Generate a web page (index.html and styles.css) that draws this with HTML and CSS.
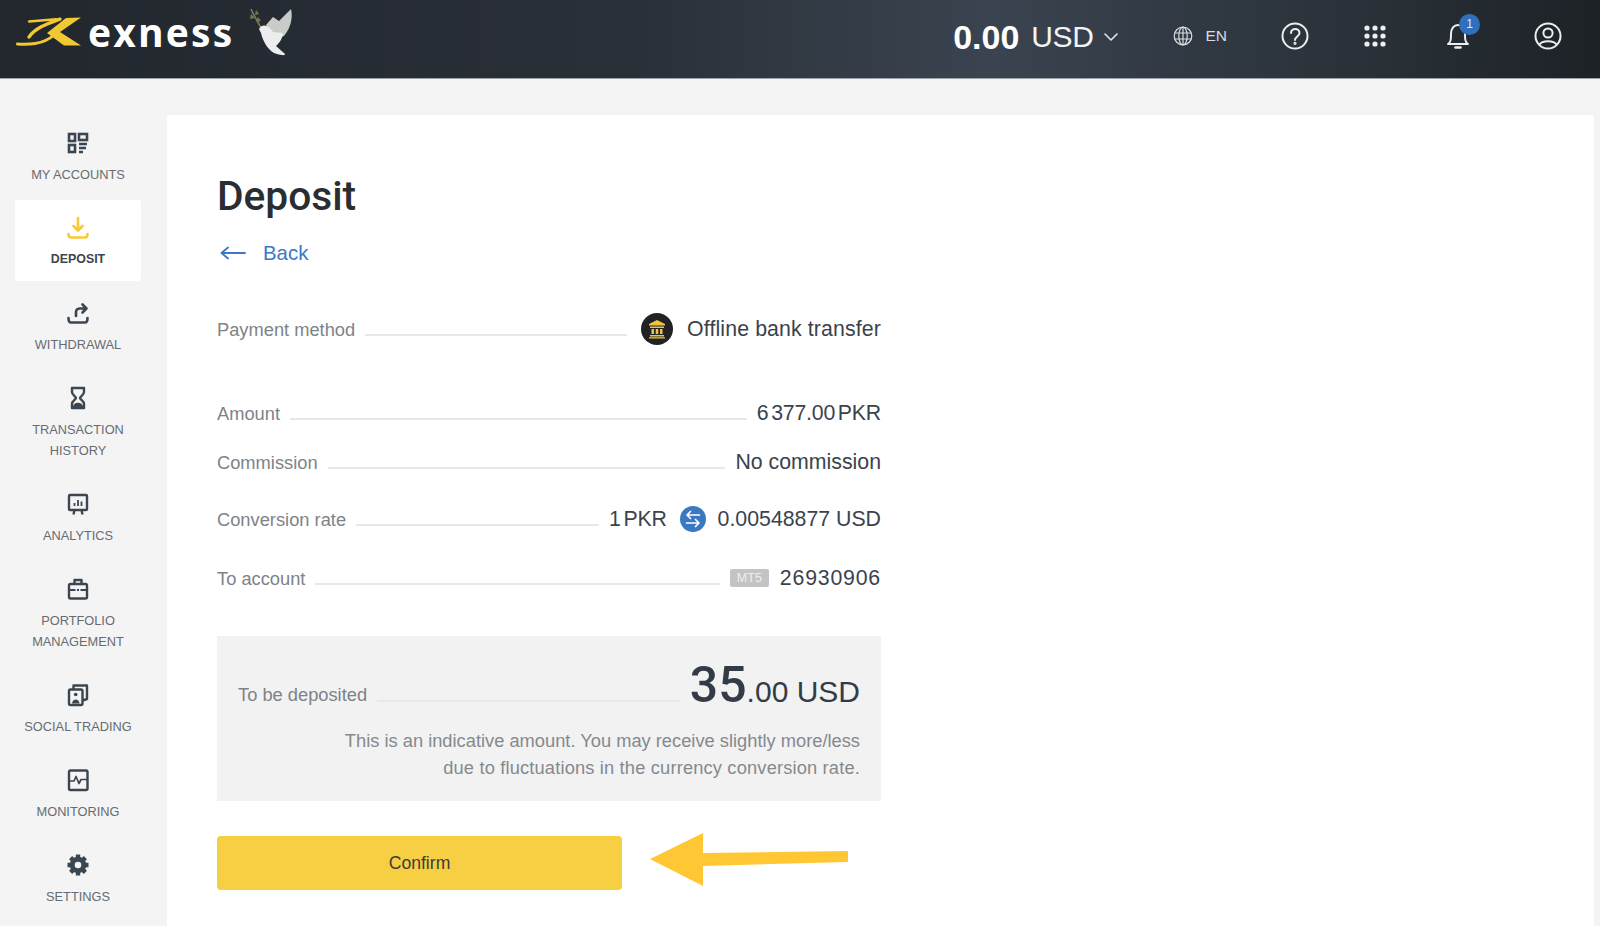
FILE: index.html
```html
<!DOCTYPE html>
<html lang="en">
<head>
<meta charset="utf-8">
<title>Deposit</title>
<link rel="stylesheet" href="styles.css">
</head>
<body>
<header class="topbar">
  <div class="brand">
    <svg class="brand-mark" viewBox="0 0 66 30" fill="none" stroke="#f2c832" stroke-linecap="round" stroke-linejoin="round">
      <path d="M13 4.5 L40 2.2" stroke-width="2.4"/>
      <path d="M44 2.2 C34 6 20 10 13 20" stroke-width="3.4"/>
      <path d="M1.5 27 C11 27.5 27 28 38 18" stroke-width="3"/>
      <path d="M65 .5 L50 1 L31 16 L48 28.5 L65 28.5 L44 15 Z" fill="#f2c832" stroke="none"/>
    </svg>
    <span class="brand-name">exness</span>
    <svg class="brand-dove" viewBox="0 0 44 48">
      <path d="M2 1 C4 6 9 14 12 20" fill="none" stroke="#7c7f5c" stroke-width="1.6"/>
      <path d="M7 2 L10 6 L6 7 Z M2 6 L6 10 L1 11 Z M9 9 L12 13 L7 14 Z" fill="#76794f"/>
      <path d="M17 17 L24 9 L30 13 L42 1 C44 9 42 20 35 28 L28 31 L20 26 Z" fill="#c9cbc9"/>
      <path d="M10 21 C13 15 20 17 24 24 L34 25 C33 33 29 36 27 38 L36 46 C36 48 32 47 28 46 C20 44 14 34 12 25 Z" fill="#eceded"/>
    </svg>
  </div>
  <div class="top-actions">
    <div class="balance">
      <strong class="balance-num">0.00</strong>
      <span class="balance-cur">USD</span>
      <svg class="chevron" viewBox="0 0 16 10" fill="none" stroke="#e4e7ea" stroke-width="1.6" stroke-linecap="round" stroke-linejoin="round"><path d="M2 2 L8 8 L14 2"/></svg>
    </div>
    <div class="lang">
      <svg class="ico-20" viewBox="0 0 20 20" fill="none" stroke="#d9dde1" stroke-width="1.2"><circle cx="10" cy="10" r="8.8"/><ellipse cx="10" cy="10" rx="4.2" ry="8.8"/><path d="M10 1.2 V18.8 M1.4 7 H18.6 M1.4 13 H18.6"/></svg>
      <span class="lang-code">EN</span>
    </div>
    <svg class="ico-28" viewBox="0 0 28 28" fill="none" stroke="#eceef0" stroke-width="2" stroke-linecap="round"><circle cx="14" cy="14" r="12.5"/><path d="M10 11 C10 5.8 18.5 5.8 18.5 11 C18.5 14.5 14 14.5 14 18"/><circle cx="14" cy="21.3" r="0.6"/></svg>
    <svg class="ico-grid" viewBox="0 0 24 24" fill="#eceef0"><circle cx="4" cy="4" r="2.6"/><circle cx="12" cy="4" r="2.6"/><circle cx="20" cy="4" r="2.6"/><circle cx="4" cy="12" r="2.6"/><circle cx="12" cy="12" r="2.6"/><circle cx="20" cy="12" r="2.6"/><circle cx="4" cy="20" r="2.6"/><circle cx="12" cy="20" r="2.6"/><circle cx="20" cy="20" r="2.6"/></svg>
    <div class="bell">
      <svg class="ico-bell" viewBox="0 0 24 28" fill="none" stroke="#eceef0" stroke-width="2" stroke-linejoin="round" stroke-linecap="round"><path d="M2 22 C5 20 5 17 5 12 C5 6.5 8 3 12 3 C16 3 19 6.5 19 12 C19 17 19 20 22 22 Z"/><path d="M9.5 25.5 H14.5" stroke-width="2.6"/></svg>
      <span class="bell-badge">1</span>
    </div>
    <svg class="ico-28" viewBox="0 0 28 28" fill="none" stroke="#eceef0" stroke-width="2"><circle cx="14" cy="14" r="12.5"/><circle cx="14" cy="11" r="4.6"/><path d="M5.5 22.5 C8 18 20 18 22.5 22.5"/></svg>
  </div>
</header>

<div class="shell">
  <nav class="sidenav">
    <a class="nav-item">
      <svg class="nav-ico" viewBox="0 0 24 24" fill="none" stroke="#3b4650" stroke-width="2.6"><rect x="3" y="3" width="6" height="7"/><rect x="13" y="3" width="8" height="6"/><rect x="3" y="14" width="6" height="7"/><path d="M13 13 H21 M13 17 H20 M13 21 H17"/></svg>
      <span class="nav-label">MY ACCOUNTS</span>
    </a>
    <a class="nav-item is-active">
      <svg class="nav-ico" viewBox="0 0 24 24" fill="none" stroke="#f7c935" stroke-width="2.6" stroke-linecap="round" stroke-linejoin="round"><path d="M12 2 V14 M7.5 10 L12 14.5 L16.5 10"/><path d="M2.5 18 C2.5 21 4 21.5 5 21.5 H19 C20 21.5 21.5 21 21.5 18"/></svg>
      <span class="nav-label">DEPOSIT</span>
    </a>
    <a class="nav-item">
      <svg class="nav-ico" viewBox="0 0 24 24" fill="none" stroke="#3b4650" stroke-width="2.6" stroke-linecap="round" stroke-linejoin="round"><path d="M10 15 V11 C10 8.5 12 7.5 14 7.5 H20 M16.5 3.5 L20.5 7.5 L16.5 11.5"/><path d="M2.5 17 C2.5 20.5 4 21.5 5 21.5 H19 C20 21.5 21.5 20.5 21.5 17"/></svg>
      <span class="nav-label">WITHDRAWAL</span>
    </a>
    <a class="nav-item">
      <svg class="nav-ico" viewBox="0 0 24 24" fill="none" stroke="#3b4650" stroke-width="2.4" stroke-linejoin="round"><path d="M6 2 H18 V6 C18 9 14 10.5 14 12 C14 13.5 18 15 18 18 V22 H6 V18 C6 15 10 13.5 10 12 C10 10.5 6 9 6 6 Z"/><path d="M8 21 C9 17 15 17 16 21 Z" fill="#3b4650"/></svg>
      <span class="nav-label">TRANSACTION<br>HISTORY</span>
    </a>
    <a class="nav-item">
      <svg class="nav-ico" viewBox="0 0 24 24" fill="none" stroke="#3b4650" stroke-width="2.4"><rect x="3" y="3" width="18" height="15" rx="1"/><path d="M8.5 18 L7.5 22.5 M15.5 18 L16.5 22.5"/><path d="M8.5 11 V14 M12 8 V14 M15.5 9.5 V14" stroke-width="1.8"/></svg>
      <span class="nav-label">ANALYTICS</span>
    </a>
    <a class="nav-item">
      <svg class="nav-ico" viewBox="0 0 24 24" fill="none" stroke="#3b4650" stroke-width="2.4" stroke-linejoin="round"><rect x="3" y="7" width="18" height="14.5" rx="1.5"/><path d="M8.5 7 V3 H15.5 V7"/><path d="M3 13 H9.5 M14.5 13 H21 M11 13 H13" stroke-width="1.8"/></svg>
      <span class="nav-label">PORTFOLIO<br>MANAGEMENT</span>
    </a>
    <a class="nav-item">
      <svg class="nav-ico" viewBox="0 0 24 24" fill="none" stroke="#3b4650" stroke-width="2.4" stroke-linejoin="round"><rect x="3" y="6.5" width="13.5" height="15.5" rx="1.5"/><path d="M7.5 6.5 V2.5 H21 V16 L16.5 17.5"/><circle cx="9.7" cy="11.5" r="1.8" fill="#3b4650" stroke="none"/><path d="M6 20.5 C6.5 15 13 15 13.5 20.5 Z" fill="#3b4650" stroke="none"/></svg>
      <span class="nav-label">SOCIAL TRADING</span>
    </a>
    <a class="nav-item">
      <svg class="nav-ico" viewBox="0 0 24 24" fill="none" stroke="#3b4650" stroke-width="2.4" stroke-linejoin="round"><rect x="3" y="2.5" width="18.5" height="19.5" rx="1.5"/><path d="M3 13 H8 L10 8.5 L13 15.5 L15 11.5 H21.5" stroke-width="1.7"/></svg>
      <span class="nav-label">MONITORING</span>
    </a>
    <a class="nav-item">
      <svg class="nav-ico" viewBox="0 0 24 24" fill="none" stroke="#3b4650"><g stroke-width="4.4"><path d="M12 1.5 V22.5 M1.5 12 H22.5 M4.6 4.6 L19.4 19.4 M19.4 4.6 L4.6 19.4"/></g><circle cx="12" cy="12" r="5.8" fill="#f4f4f4" stroke-width="5"/></svg>
      <span class="nav-label">SETTINGS</span>
    </a>
  </nav>

  <main class="card">
    <h1 class="title">Deposit</h1>
    <a class="back">
      <svg class="back-ico" viewBox="0 0 26 14" fill="none" stroke="#3c78c3" stroke-width="1.8" stroke-linecap="round" stroke-linejoin="round"><path d="M25 7 H2 M8 1.5 L1.5 7 L8 12.5"/></svg>
      <span>Back</span>
    </a>

    <div class="details">
      <div class="row row-method">
        <span class="row-label">Payment method</span><i class="leader"></i>
        <svg class="ico-bank" viewBox="0 0 32 32"><circle cx="16" cy="16" r="16" fill="#202226"/><path d="M16 7 L24 11 V12.5 H8 V11 Z M9 13.5 H23 V15 H9 Z M10.5 16 H13 V21 H10.5 Z M14.7 16 H17.3 V21 H14.7 Z M19 16 H21.5 V21 H19 Z M9 22 H23 V23.5 H9 Z M8 24.2 H24 V25.5 H8 Z" fill="#f0c53e"/></svg>
        <span class="row-value value-wide">Offline bank transfer</span>
      </div>
      <div class="row row-amount">
        <span class="row-label">Amount</span><i class="leader"></i>
        <span class="row-value value-tight">6 377.00 PKR</span>
      </div>
      <div class="row row-commission">
        <span class="row-label">Commission</span><i class="leader"></i>
        <span class="row-value">No commission</span>
      </div>
      <div class="row row-rate">
        <span class="row-label">Conversion rate</span><i class="leader"></i>
        <span class="row-value value-tight">1 PKR</span>
        <svg class="ico-swap" viewBox="0 0 26 26"><circle cx="13" cy="13" r="13" fill="#3a78c2"/><path d="M19.5 9 H7.5 M10.5 5.5 L7 9 L10.5 12.5 M6.5 17 H18.5 M15.5 13.5 L19 17 L15.5 20.5" fill="none" stroke="#fff" stroke-width="1.7" stroke-linecap="round" stroke-linejoin="round"/></svg>
        <span class="row-value">0.00548877 USD</span>
      </div>
      <div class="row row-account">
        <span class="row-label">To account</span><i class="leader"></i>
        <span class="badge">MT5</span>
        <span class="row-value value-number">26930906</span>
      </div>
    </div>

    <section class="summary">
      <div class="summary-top">
        <span class="row-label">To be deposited</span><i class="leader"></i>
        <span class="sum"><b class="sum-int">35</b><span class="sum-rest">.00 USD</span></span>
      </div>
      <p class="note">This is an indicative amount. You may receive slightly more/less<br><span class="note-second">due to fluctuations in the currency conversion rate.</span></p>
    </section>

    <div class="actions">
      <button class="confirm" type="button">Confirm</button>
      <svg class="pointer" viewBox="0 0 200 54"><path d="M0 26 L53 0 V20 L198 18 V29 L53 33 V53 Z" fill="#ffc734"/></svg>
    </div>
  </main>
</div>
</body>
</html>
```

FILE: styles.css
```css
* { box-sizing: border-box; }
html, body { margin: 0; height: 100%; overflow: hidden; }
body {
  background: #f4f4f4;
  color: #3a434c;
  font-family: "Liberation Sans", Arial, sans-serif;
}

/* top bar */
.topbar {
  height: 79px;
  padding: 0 38px 7px 16px;
  display: flex;
  align-items: center;
  justify-content: space-between;
  border-bottom: 1px solid #9ea3a7;
  background: linear-gradient(90deg, #22272e 0%, #2a3038 40%, #3a4450 62%, #323b45 72%, #2a3138 85%, #1c2226 100%);
}
.brand { display: flex; align-items: center; margin-bottom: 8px; }
.brand-mark { width: 66px; height: 30px; display: block; }
.brand-name {
  margin-left: 6px;
  color: #fff;
  font-family: "Open Sans", sans-serif;
  font-weight: 700;
  font-size: 39px;
  line-height: 44px;
  letter-spacing: 2.2px;
}
.brand-dove { width: 44px; height: 48px; margin: 0 0 0 15px; display: block; }

.top-actions { display: flex; align-items: center; gap: 54px; }
.balance { display: flex; align-items: center; color: #fff; padding-top: 2px; }
.balance-num { font-size: 34px; line-height: 40px; font-weight: 700; }
.balance-cur { margin-left: 12px; font-size: 30px; line-height: 40px; color: #f2f3f4; letter-spacing: -.4px; }
.chevron { width: 16px; height: 10px; margin-left: 10px; }
.lang { display: flex; align-items: center; }
.lang-code { margin-left: 12px; font-size: 15.5px; color: #d9dde1; }
.ico-20 { width: 20px; height: 20px; }
.ico-28 { width: 28px; height: 28px; }
.ico-grid { width: 24px; height: 24px; }
.bell { position: relative; width: 24px; height: 28px; margin-left: 5px; margin-right: 10px; }
.ico-bell { width: 24px; height: 28px; display: block; }
.bell-badge {
  position: absolute;
  left: 13px;
  top: -8px;
  width: 21px;
  height: 21px;
  border-radius: 50%;
  background: #2e70bd;
  color: #dfe9f5;
  font-size: 12px;
  line-height: 21px;
  text-align: center;
}

/* layout */
.shell { display: flex; height: 847px; }
.sidenav {
  width: 167px;
  flex: none;
  padding: 36px 26px 0 15px;
  display: flex;
  flex-direction: column;
  gap: 4px;
}
.nav-item {
  display: flex;
  flex-direction: column;
  align-items: center;
  padding: 16px 0 11px;
  border-radius: 3px;
  color: #666c72;
  font-size: 12.8px;
  line-height: 21px;
  text-align: center;
}
.nav-ico { width: 24px; height: 24px; margin-bottom: 9px; display: block; }
.nav-label { display: block; white-space: nowrap; }
.is-active { background: #fff; color: #3b4650; font-size: 12.4px; font-weight: 700; }

.card {
  flex: none;
  width: 1427px;
  margin-top: 36px;
  padding: 57px 0 0 50px;
  background: #fff;
  border-radius: 2px 2px 0 0;
}
.title {
  margin: 0;
  font-family: Roboto, "Liberation Sans", sans-serif;
  font-weight: 500;
  font-size: 40.7px;
  line-height: 48px;
  color: #2a2e33;
}
.back {
  display: flex;
  align-items: center;
  margin-top: 18px;
  height: 30px;
  padding-left: 3px;
  color: #3c78c3;
  font-size: 20.4px;
}
.back-ico { width: 26px; height: 14px; margin-right: 17px; }

/* detail rows */
.details { width: 664px; margin-top: 46px; }
.row {
  display: flex;
  align-items: center;
  height: 30px;
  white-space: nowrap;
}
.row-amount { margin-top: 54px; }
.row-commission { margin-top: 19px; }
.row-rate { margin-top: 27px; }
.row-account { margin-top: 29px; }
.row-label { padding-top: 2px; font-size: 18.3px; line-height: 24px; color: #7e8388; }
.row-value { font-size: 21.3px; line-height: 30px; color: #3a434c; }
.value-wide { letter-spacing: .12px; }
.value-tight { letter-spacing: -.2px; word-spacing: -3px; }
.value-number { letter-spacing: .8px; }
.leader {
  flex: 1;
  align-self: flex-end;
  height: 2px;
  margin: 0 10px 8px;
  background: #e8e8e8;
}
.ico-bank { width: 32px; height: 32px; margin: 0 14px 0 4px; flex: none; }
.ico-swap { width: 26px; height: 26px; margin: 0 12px 0 13px; flex: none; }
.badge {
  width: 39px;
  height: 18px;
  margin-right: 11px;
  border-radius: 2px;
  background: #c3c4c5;
  color: #eee;
  font-size: 12.5px;
  line-height: 18px;
  text-align: center;
}

/* summary box */
.summary {
  width: 664px;
  margin-top: 43px;
  padding: 0 21px 20px;
  background: #f2f2f2;
}
.summary-top {
  display: flex;
  align-items: flex-end;
  height: 92px;
  padding-bottom: 21px;
  white-space: nowrap;
}
.summary-top .leader { margin-bottom: 5px; }
.sum { margin-bottom: -20px; line-height: 60px; color: #333c46; }
.sum-int { font-family: Roboto, "Liberation Sans", sans-serif; font-size: 50px; font-weight: 500; }
.sum-rest { font-size: 30px; }
.note {
  margin: 0;
  font-size: 18.3px;
  line-height: 26.5px;
  color: #85898e;
  text-align: right;
}
.note-second { letter-spacing: .16px; }

/* confirm */
.actions { display: flex; align-items: center; margin-top: 35px; }
.confirm {
  width: 405px;
  height: 54px;
  padding: 0;
  border: 0;
  border-radius: 4px;
  background: #f6cf42;
  color: #3a3d3a;
  font-family: "Liberation Sans", Arial, sans-serif;
  font-size: 17.6px;
}
.pointer { width: 200px; height: 54px; margin: -6px 0 0 28px; }
```
